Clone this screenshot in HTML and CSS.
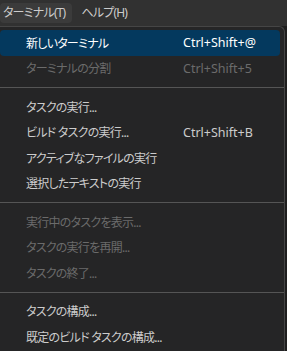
FILE: index.html
```html
<!DOCTYPE html>
<html lang="ja">
<head>
    <meta charset="UTF-8">
    <title>ターミナル メニュー</title>
    <link rel="stylesheet" href="styles.css">
</head>
<body>
    <div class="menubar">
        <div class="menubar-item active">ターミナル(T)</div>
        <div class="menubar-item">ヘルプ(H)</div>
    </div>

    <div class="menu">
        <div class="menu-item selected"><span class="label">新しいターミナル</span><span class="key">Ctrl+Shift+@</span></div>
        <div class="menu-item disabled"><span class="label">ターミナルの分割</span><span class="key">Ctrl+Shift+5</span></div>
        <div class="separator"></div>
        <div class="menu-item"><span class="label">タスクの実行...</span></div>
        <div class="menu-item"><span class="label">ビルド タスクの実行...</span><span class="key">Ctrl+Shift+B</span></div>
        <div class="menu-item"><span class="label">アクティブなファイルの実行</span></div>
        <div class="menu-item"><span class="label">選択したテキストの実行</span></div>
        <div class="separator"></div>
        <div class="menu-item disabled"><span class="label">実行中のタスクを表示...</span></div>
        <div class="menu-item disabled"><span class="label">タスクの実行を再開...</span></div>
        <div class="menu-item disabled"><span class="label">タスクの終了...</span></div>
        <div class="separator"></div>
        <div class="menu-item"><span class="label">タスクの構成...</span></div>
        <div class="menu-item"><span class="label">既定のビルド タスクの構成...</span></div>
    </div>
</body>
</html>
```

FILE: styles.css
```css
* {
    margin: 0;
    padding: 0;
    box-sizing: border-box;
}

body {
    font-family: "Noto Sans", "Noto Sans CJK JP", sans-serif;
    font-feature-settings: "palt";
    font-size: 12.5px;
    background: #1e1e1e;
    color: #cccccc;
    height: 351px;
    overflow: hidden;
}

/* top bar */
.menubar {
    height: 26px;
    background: #313131;
    display: flex;
    align-items: center;
    gap: 6px;
}

.menubar-item {
    height: 20px;
    line-height: 20px;
    padding: 0 7px 0 3px;
    border-radius: 4px;
    color: #cccccc;
    font-size: 12px;
    letter-spacing: -0.8px;
}

.menubar-item.active {
    background: #3b3b3b;
}

/* dropdown */
.menu {
    width: 286px;
    margin-left: -1px;
    background: #252526;
    border: 1px solid #454545;
    border-bottom: none;
    border-radius: 0 6px 0 0;
    padding: 3px 4px 0 0;
    height: 325px;
}

.menu-item {
    height: 25.5px;
    display: flex;
    align-items: center;
    padding-left: 26px;
    border-radius: 4px;
}

.menu-item .label {
    flex: 1;
    font-size: 12px;
    letter-spacing: -0.75px;
}

.menu-item .key {
    width: 97px;
    flex-shrink: 0;
}

.menu-item.selected {
    background: #04395e;
    color: #ffffff;
}

.menu-item.disabled {
    color: #6b6b6b;
}

.separator {
    height: 1px;
    background: #555555;
    margin: 6px -4px 6px 0;
}
```
